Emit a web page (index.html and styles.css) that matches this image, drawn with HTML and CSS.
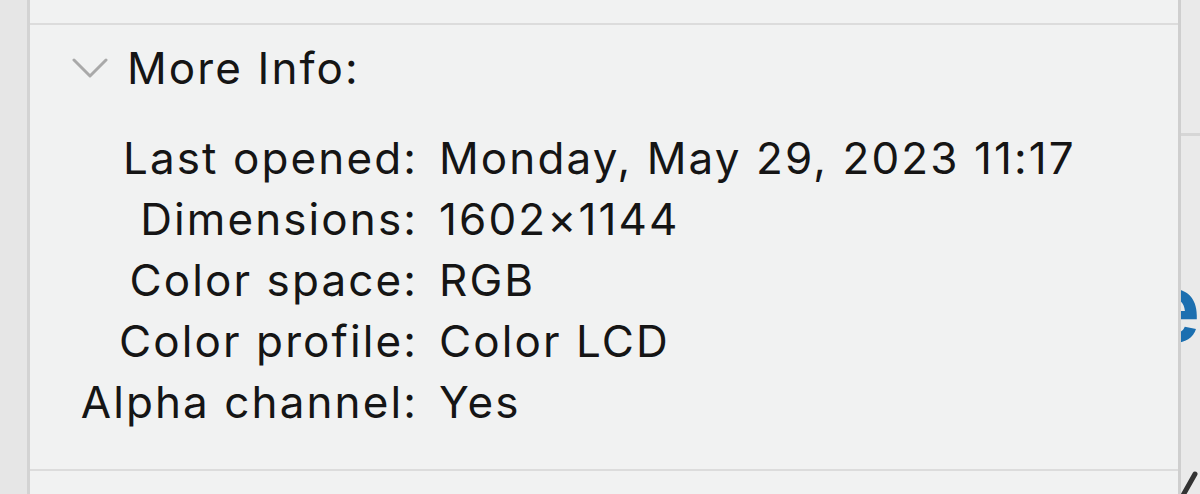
FILE: index.html
```html
<!DOCTYPE html>
<html>
<head>
<meta charset="utf-8">
<link rel="stylesheet" href="styles.css">
</head>
<body>
<div class="window">
  <div class="left-strip"></div>
  <div class="panel">
    <div class="panel-top"></div>
    <section class="more-info">
      <div class="header">
        <svg class="chevron" width="36" height="22" viewBox="0 0 36 22"><path d="M2 3 L18 19 L34 3" fill="none" stroke="#a9a9a9" stroke-width="3" stroke-linecap="round" stroke-linejoin="round"/></svg>
        <span class="title">More Info:</span>
      </div>
      <div class="rows">
        <div class="label">Last opened:</div><div class="value">Monday, May 29, 2023 11:17</div>
        <div class="label">Dimensions:</div><div class="value">1602×1144</div>
        <div class="label">Color space:</div><div class="value">RGB</div>
        <div class="label">Color profile:</div><div class="value">Color LCD</div>
        <div class="label">Alpha channel:</div><div class="value">Yes</div>
      </div>
    </section>
    <div class="panel-bottom"></div>
  </div>
  <div class="right-strip">
    <div class="right-line"></div>
    <span class="blue-e">e</span>
    <svg class="corner-mark" width="18" height="26" viewBox="0 0 18 26"><path d="M1 27 L14 4" fill="none" stroke="#333" stroke-width="5" stroke-linecap="round"/></svg>
  </div>
</div>
</body>
</html>
```

FILE: styles.css
```css
html, body {
  margin: 0;
  padding: 0;
  width: 1200px;
  height: 494px;
  overflow: hidden;
  background: #ececec;
  font-family: "Inter", "Noto Sans", sans-serif;
  color: #151515;
}
.window {
  display: flex;
  height: 494px;
}
.left-strip {
  width: 27px;
  background: #e6e6e6;
  border-right: 3px solid #d3d3d3;
  flex: none;
}
.panel {
  flex: 1;
  background: #f1f2f2;
  display: flex;
  flex-direction: column;
  border-right: 3px solid #cfcfcf;
}
.panel-top {
  height: 23px;
  border-bottom: 2px solid #dcdcdc;
  flex: none;
}
.more-info {
  flex: 1;
}
.header {
  display: flex;
  align-items: center;
  height: 61px;
  margin-top: 13px;
}
.chevron {
  margin-left: 42px;
  margin-right: 19px;
  margin-top: -2px;
}
.title, .label, .value {
  font-size: 44px;
  line-height: 61px;
  letter-spacing: 2.1px;
  white-space: nowrap;
}
.rows {
  display: grid;
  grid-template-columns: 388px auto;
  column-gap: 21px;
  margin-top: 29px;
  justify-content: start;
}
.label {
  text-align: right;
}
.panel-bottom {
  height: 23px;
  border-top: 2px solid #dcdcdc;
  flex: none;
}
.right-strip {
  width: 19px;
  flex: none;
  position: relative;
  overflow: hidden;
  background: #eaeaea;
}
.right-line {
  margin-top: 133px;
  height: 3px;
  background: #d6d6d6;
}
.blue-e {
  position: absolute;
  left: -37px;
  top: 259px;
  font-size: 96px;
  font-weight: 600;
  line-height: 1;
  color: #1c6fb0;
}
.corner-mark {
  position: absolute;
  left: 0;
  top: 470px;
}
```
